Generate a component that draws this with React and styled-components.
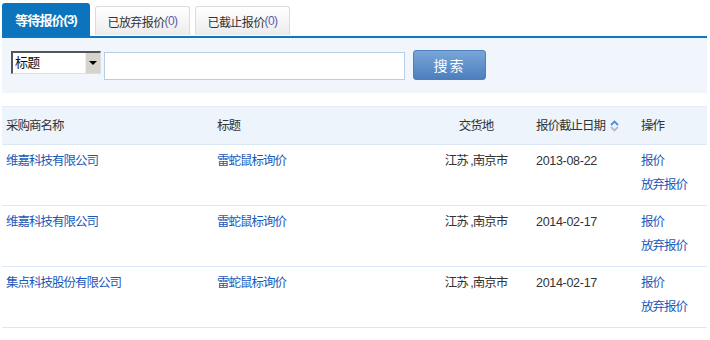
import React from 'react';
import styled, { createGlobalStyle } from 'styled-components';

const Global = createGlobalStyle`
    body {
        margin: 0;
        background: #fff;
        font-family: "Liberation Sans", "Noto Sans CJK SC", sans-serif;
        font-size: 12px;
        color: #333;
    }
`;

const Page = styled.div`
    width: 705px;
    padding: 3px 3px 0 2px;
`;

const Tabs = styled.div`
    display: flex;
    align-items: flex-end;
    gap: 5px;
    height: 33px;
    border-bottom: 2px solid #0b78bf;
`;

const Tab = styled.div`
    display: flex;
    align-items: center;
    justify-content: center;
    box-sizing: border-box;
    height: ${p => (p.active ? '33px' : '29px')};
    width: ${p => (p.active ? '88px' : '95px')};
    margin-bottom: ${p => (p.active ? '0' : '1px')};
    border-radius: 3px 3px 0 0;
    background: ${p => (p.active ? '#0c74bc' : 'linear-gradient(#ffffff, #ececec)')};
    border: ${p => (p.active ? 'none' : '1px solid #dcdcdc')};
    border-bottom: none;
    color: ${p => (p.active ? '#fff' : '#333')};
    font-weight: ${p => (p.active ? 700 : 400)};
    font-size: ${p => (p.active ? '13px' : '12px')};
    letter-spacing: ${p => (p.active ? '-0.9px' : '-0.6px')};
`;

const Count = styled.span`
    color: ${p => (p.active ? '#fff' : '#5a5aa8')};
`;

const SearchPanel = styled.div`
    display: flex;
    align-items: flex-start;
    height: 55px;
    padding: 12px 0 0 9px;
    box-sizing: border-box;
    background: #f1f6fd;
`;

const Select = styled.div`
    display: flex;
    box-sizing: border-box;
    width: 90px;
    height: 23px;
    margin-top: 1px;
    background: #fff;
    border-top: 2px solid #555;
    border-left: 2px solid #555;
    border-right: 1px solid #ddd;
    border-bottom: 1px solid #ddd;
`;

const SelectLabel = styled.span`
    flex: 1;
    padding-left: 2px;
    line-height: 19px;
    font-size: 13px;
    letter-spacing: -0.8px;
    color: #111;
`;

const SelectArrow = styled.span`
    width: 14px;
    background: #d6d3cc;
    border-left: 1px solid #eee;
    display: flex;
    align-items: center;
    justify-content: center;
    &::after {
        content: '';
        border-left: 4px solid transparent;
        border-right: 4px solid transparent;
        border-top: 4px solid #000;
    }
`;

const Input = styled.div`
    box-sizing: border-box;
    width: 301px;
    height: 28px;
    margin: 2px 0 0 3px;
    background: #fff;
    border: 1px solid #b9cde6;
`;

const SearchButton = styled.div`
    box-sizing: border-box;
    width: 73px;
    height: 30px;
    margin-left: 8px;
    border-radius: 3px;
    border: 1px solid #4f7fb8;
    background: linear-gradient(#77a6d8, #4d7fbe);
    color: #fff;
    font-size: 14px;
    display: flex;
    align-items: center;
    justify-content: center;
    letter-spacing: 2px;
`;

const Table = styled.div`
    margin-top: 13px;
`;

const Row = styled.div`
    display: grid;
    grid-template-columns: 211px 211px 100px 105px 78px;
    box-sizing: border-box;
    height: ${p => (p.head ? '39px' : '61px')};
    align-items: ${p => (p.head ? 'center' : 'start')};
    padding-top: ${p => (p.head ? '0' : '4px')};
    background: ${p => (p.head ? '#edf4fc' : '#fff')};
    border-top: ${p => (p.head ? '1px solid #e3ecf7' : 'none')};
    border-bottom: 1px solid #dce8f6;
`;

const Cell = styled.div`
    padding-left: ${p => p.pad || 4}px;
    line-height: 24px;
    font-size: 12.5px;
    letter-spacing: -1px;
    color: ${p => (p.link ? '#1a58b8' : '#333')};
    text-align: ${p => (p.center ? 'center' : 'left')};
    display: flex;
    flex-direction: column;
    align-items: ${p => (p.center ? 'center' : 'flex-start')};
`;

const HeadText = styled.span`
    display: flex;
    align-items: center;
    gap: 5px;
`;

const Date = styled.span`
    letter-spacing: -0.3px;
`;

const SortIcon = () => (
    <svg width="9" height="12" viewBox="0 0 9 12">
        <path d="M1 5 L4.5 1.5 L8 5" fill="none" stroke="#4a8fd6" strokeWidth="1.8" />
        <path d="M1 7 L4.5 10.5 L8 7" fill="none" stroke="#b8bcc2" strokeWidth="1.8" />
    </svg>
);

const rows = [
    { buyer: '维嘉科技有限公司', date: '2013-08-22' },
    { buyer: '维嘉科技有限公司', date: '2014-02-17' },
    { buyer: '集点科技股份有限公司', date: '2014-02-17' },
];

const App = () => {
    return (
        <Page>
            <Global />
            <Tabs>
                <Tab active>等待报价<Count active>(3)</Count></Tab>
                <Tab>已放弃报价<Count>(0)</Count></Tab>
                <Tab>已截止报价<Count>(0)</Count></Tab>
            </Tabs>
            <SearchPanel>
                <Select>
                    <SelectLabel>标题</SelectLabel>
                    <SelectArrow />
                </Select>
                <Input />
                <SearchButton>搜索</SearchButton>
            </SearchPanel>
            <Table>
                <Row head>
                    <Cell>采购商名称</Cell>
                    <Cell>标题</Cell>
                    <Cell center>交货地</Cell>
                    <Cell pad={12}><HeadText>报价截止日期<SortIcon /></HeadText></Cell>
                    <Cell pad={12}>操作</Cell>
                </Row>
                {rows.map((r, i) => (
                    <Row key={i}>
                        <Cell link>{r.buyer}</Cell>
                        <Cell link>雷蛇鼠标询价</Cell>
                        <Cell center>江苏 ,南京市</Cell>
                        <Cell pad={12}><Date>{r.date}</Date></Cell>
                        <Cell pad={12} link>
                            <span>报价</span>
                            <span>放弃报价</span>
                        </Cell>
                    </Row>
                ))}
            </Table>
        </Page>
    );
};

export default App;
